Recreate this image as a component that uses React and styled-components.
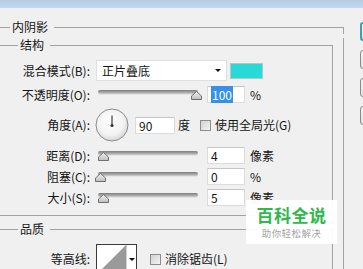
import React from 'react';
import styled, { createGlobalStyle } from 'styled-components';

const LINE = '#a2a2a2';

const GlobalStyle = createGlobalStyle`
  html, body {
    margin: 0;
    padding: 0;
  }
  body {
    background: #f0f0f0;
    font-family: "Noto Sans CJK SC", "Liberation Sans", sans-serif;
    font-size: 12px;
    color: #151515;
  }
`;

const Window = styled.div`
  position: relative;
  width: 363px;
  height: 269px;
  overflow: hidden;
  background: #f0f0f0;
  display: flex;
  flex-direction: column;
`;

const TitleStrip = styled.div`
  flex: none;
  height: 8px;
  background: linear-gradient(#b4cce6, #c3d7ed);
`;

const Body = styled.div`
  display: flex;
  flex: 1;
  min-height: 0;
  padding-top: 12px;
`;

const Main = styled.div`
  flex: none;
  width: 344px;
`;

const GroupHead = styled.div`
  display: flex;
  height: 14px;
  margin-top: ${(p) => p.$mt || 0}px;
`;

const HeadLead = styled.div`
  flex: none;
  width: ${(p) => p.$w}px;
  margin-top: 7px;
  border-top: 1px solid ${LINE};
`;

const HeadTitle = styled.div`
  flex: none;
  line-height: 14px;
  padding: 0 6px 0 2px;
`;

const HeadTail = styled.div`
  flex: 1;
  margin-top: 7px;
  border-top: 1px solid ${LINE};
  border-right: 1px solid ${LINE};
`;

const GroupBox = styled.div`
  border-right: 1px solid ${LINE};
  border-bottom: ${(p) => (p.$closed ? `1px solid ${LINE}` : 'none')};
  padding: ${(p) => p.$pad || '0'};
`;

const Row = styled.div`
  display: flex;
  align-items: ${(p) => p.$align || 'center'};
  height: ${(p) => p.$h}px;
  margin-top: ${(p) => p.$mt || 0}px;
`;

const Label = styled.div`
  flex: none;
  width: 90px;
  padding-right: 2px;
  text-align: right;
  line-height: 14px;
  white-space: nowrap;
  margin-top: ${(p) => p.$mt || 0}px;
`;

const Select = styled.div`
  flex: none;
  width: 131px;
  height: 21px;
  margin-left: 4px;
  box-sizing: border-box;
  background: #fff;
  border: 1px solid #e0e0e0;
  display: flex;
  align-items: center;
  justify-content: space-between;
  padding: 0 5px 0 5px;
  line-height: 14px;
`;

const Caret = styled.span`
  width: 0;
  height: 0;
  border-left: ${(p) => p.$s || 3.5}px solid transparent;
  border-right: ${(p) => p.$s || 3.5}px solid transparent;
  border-top: ${(p) => p.$s || 3.5}px solid #111;
`;

const Swatch = styled.div`
  flex: none;
  width: 33px;
  height: 16px;
  margin-left: 3px;
  box-sizing: border-box;
  background: #27d9d7;
  border: 1px solid #b9c4c4;
`;

const Slider = styled.div`
  position: relative;
  flex: none;
  align-self: stretch;
  width: 100px;
  margin-left: 6px;
`;

const Track = styled.div`
  margin-top: 4px;
  height: 4px;
  border-radius: 3px;
  background: linear-gradient(#7d7d7d, #a9a9a9 60%, #cfcfcf);
  box-shadow: 0 1px 0 #e4e4e4;
`;

const Thumb = styled.svg`
  position: absolute;
  top: 5px;
  width: 11px;
  height: 9px;
`;

const Field = styled.div`
  flex: none;
  width: ${(p) => p.$w || 38}px;
  height: 17px;
  margin-left: ${(p) => p.$ml ?? 9}px;
  box-sizing: border-box;
  background: #fff;
  border: 1px solid #dcdcdc;
  border-top-color: #c4c6ca;
  padding-left: 3px;
  line-height: 15px;
  font-size: 12px;
`;

const Selected = styled.span`
  background: #3790e8;
  color: #fff;
  padding: 0 1px;
`;

const Unit = styled.span`
  flex: none;
  margin-left: ${(p) => p.$ml ?? 5}px;
  line-height: 14px;
  white-space: nowrap;
`;

const Dial = styled.svg`
  flex: none;
  width: 34px;
  height: 34px;
  margin-left: 3px;
`;

const Check = styled.span`
  flex: none;
  width: 11px;
  height: 11px;
  margin-left: ${(p) => p.$ml}px;
  margin-top: ${(p) => p.$mt || 0}px;
  box-sizing: border-box;
  border: 1px solid #8c8c8c;
  background: linear-gradient(135deg, #d2d2d2, #f4f4f4);
`;

const CheckText = styled.span`
  flex: none;
  margin-left: 4px;
  margin-top: ${(p) => p.$mt || 0}px;
  line-height: 14px;
  white-space: nowrap;
`;

const Contour = styled.div`
  flex: none;
  display: flex;
  width: 41px;
  height: 31px;
  margin-left: 4px;
  box-sizing: border-box;
  border: 1px solid #3a3a3a;
  background: #fff;
`;

const ContourArrow = styled.div`
  flex: 1;
  display: flex;
  align-items: center;
  justify-content: center;
  border-left: 1px solid #d0d0d0;
`;

const Buttons = styled.div`
  flex: none;
  display: flex;
  flex-direction: column;
  gap: 9px;
  margin-left: 16px;
  padding-top: 2px;
`;

const Button = styled.div`
  width: 80px;
  height: 19px;
  box-sizing: border-box;
  border-radius: 3px;
  border: ${(p) => (p.$focus ? '2px solid #33a6b3' : '1px solid #8a8a8a')};
  background: linear-gradient(#f3f3f3, #e2e2e2);
`;

const Watermark = styled.div`
  position: absolute;
  left: 246px;
  top: 200px;
  width: 91px;
  height: 44px;
  background: rgba(255, 255, 255, 0.96);
  display: flex;
  flex-direction: column;
  align-items: center;
  justify-content: center;
`;

const MarkTitle = styled.div`
  font-size: 17px;
  font-weight: 700;
  line-height: 20px;
  letter-spacing: 0.5px;
  color: #2fb84c;
`;

const MarkSub = styled.div`
  font-size: 9.5px;
  line-height: 12px;
  margin-top: 2px;
  color: #a3a3a3;
  letter-spacing: 0.4px;
`;

const SliderRow = ({ label, value, pos, unit, mt, selected }) => (
  <Row $h={17} $mt={mt}>
    <Label>{label}</Label>
    <Slider>
      <Track />
      <Thumb viewBox="0 0 11 9" style={{ left: pos - 5 }}>
        <defs>
          <linearGradient id="thumbFill" x1="0" y1="0" x2="0" y2="1">
            <stop offset="0" stopColor="#f4f4f4" />
            <stop offset="1" stopColor="#bdbdbd" />
          </linearGradient>
        </defs>
        <polygon
          points="5.5,0.5 10.5,5 10.5,8.5 0.5,8.5 0.5,5"
          fill="url(#thumbFill)"
          stroke="#6f6f6f"
          strokeWidth="1"
        />
      </Thumb>
    </Slider>
    <Field>{selected ? <Selected>{value}</Selected> : value}</Field>
    <Unit>{unit}</Unit>
  </Row>
);

const GroupHeader = ({ title, lead, mt }) => (
  <GroupHead $mt={mt}>
    <HeadLead $w={lead} />
    <HeadTitle>{title}</HeadTitle>
    <HeadTail />
  </GroupHead>
);

const App = () => (
  <>
    <GlobalStyle />
    <Window>
      <TitleStrip />
      <Body>
        <Main>
          <GroupHeader title="内阴影" lead={10} />
          <GroupBox $pad="0 10px 0 0">
            <GroupHeader title="结构" lead={18} mt={4} />
            <GroupBox $closed $pad="8px 0 9px 0">
              <Row $h={21}>
                <Label>混合模式(B):</Label>
                <Select>
                  <span>正片叠底</span>
                  <Caret />
                </Select>
                <Swatch />
              </Row>
              <SliderRow label="不透明度(O):" value="100" pos={98} unit="%" mt={5} selected />
              <Row $h={36} $mt={4}>
                <Label>角度(A):</Label>
                <Dial viewBox="0 0 34 34">
                  <defs>
                    <radialGradient id="dialFill" cx="0.45" cy="0.4" r="0.6">
                      <stop offset="0" stopColor="#ffffff" />
                      <stop offset="0.7" stopColor="#f2f2f2" />
                      <stop offset="1" stopColor="#d6d6d6" />
                    </radialGradient>
                  </defs>
                  <circle cx="17" cy="17" r="16" fill="url(#dialFill)" stroke="#8b8b8b" />
                  <line x1="17" y1="7.5" x2="17" y2="17" stroke="#555" strokeWidth="1.4" />
                  <circle cx="17" cy="17.5" r="1.6" fill="#333" />
                </Dial>
                <Field $w={40} $ml={6}>90</Field>
                <Unit $ml={3}>度</Unit>
                <Check $ml={10} />
                <CheckText>使用全局光(G)</CheckText>
              </Row>
              <SliderRow label="距离(D):" value="4" pos={5} unit="像素" mt={4} />
              <SliderRow label="阻塞(C):" value="0" pos={2} unit="%" mt={4} />
              <SliderRow label="大小(S):" value="5" pos={5} unit="像素" mt={4} />
            </GroupBox>
            <GroupHeader title="品质" lead={18} mt={6} />
            <GroupBox $pad="8px 0 0 0">
              <Row $h={31} $align="flex-start">
                <Label $mt={8}>等高线:</Label>
                <Contour>
                  <svg width="29" height="29" viewBox="0 0 29 29">
                    <polygon points="0,29 29,0 29,29" fill="#9a9a9a" />
                  </svg>
                  <ContourArrow>
                    <Caret $s={3} />
                  </ContourArrow>
                </Contour>
                <Check $ml={13} $mt={10} />
                <CheckText $mt={8}>消除锯齿(L)</CheckText>
              </Row>
            </GroupBox>
          </GroupBox>
        </Main>
        <Buttons>
          <Button $focus />
          <Button />
          <Button />
          <Button />
        </Buttons>
      </Body>
      <Watermark>
        <MarkTitle>百科全说</MarkTitle>
        <MarkSub>助你轻松解决</MarkSub>
      </Watermark>
    </Window>
  </>
);

export default App;
